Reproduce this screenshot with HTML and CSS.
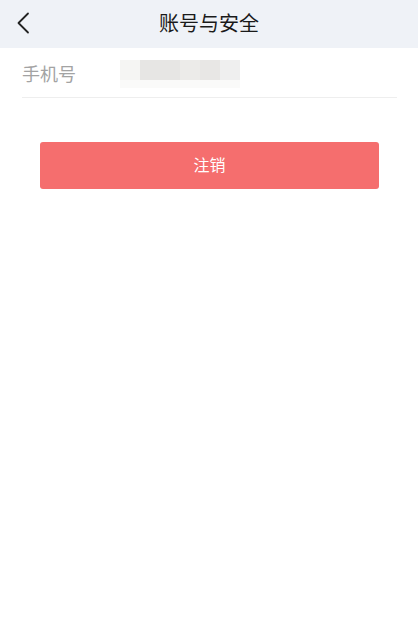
FILE: index.html
```html
<!DOCTYPE html>
<html lang="zh-CN">
<head>
<meta charset="utf-8">
<meta name="viewport" content="width=device-width, initial-scale=1">
<title>账号与安全</title>
<link rel="stylesheet" href="styles.css">
</head>
<body>
<header class="nav">
  <span class="back">
    <svg width="14" height="22" viewBox="0 0 14 22" aria-hidden="true"><path d="M12 1.5 L2.5 11 L12 20.5" fill="none" stroke="#222" stroke-width="1.8" stroke-linecap="round" stroke-linejoin="round"/></svg>
  </span>
  <h1 class="title">账号与安全</h1>
</header>
<main class="content">
  <div class="row">
    <span class="label">手机号</span>
    <span class="masked">
      <span class="mrow top">
        <i class="b1"></i><i class="b2"></i><i class="b3"></i><i class="b4"></i><i class="b5"></i>
      </span>
      <span class="mrow bottom"></span>
    </span>
  </div>
  <div class="actions">
    <button class="btn-danger" type="button">注销</button>
  </div>
</main>
</body>
</html>
```

FILE: styles.css
```css
* { box-sizing: border-box; }
html, body { margin: 0; padding: 0; background: #fff; }
body {
  width: 418px;
  min-height: 622px;
  font-family: "Noto Sans CJK SC", "Noto Sans", sans-serif;
}
.nav {
  height: 48px;
  background: #eff2f7;
  display: flex;
  align-items: center;
  justify-content: center;
  position: relative;
}
.back {
  position: absolute;
  left: 16px;
  top: 12px;
  display: flex;
}
.title {
  margin: 0 0 2px 0;
  font-size: 20px;
  font-weight: 400;
  color: #1a1a1a;
  line-height: 1;
}
.content {
  padding: 0 21px 0 22px;
}
.row {
  height: 50px;
  border-bottom: 1px solid #eeeeee;
  display: flex;
  align-items: center;
}
.label {
  width: 98px;
  font-size: 18px;
  color: #a3a3a3;
  line-height: 1;
  margin-top: 0;
}
.masked {
  display: flex;
  flex-direction: column;
  width: 120px;
  margin-top: 2px;
}
.mrow { display: flex; }
.mrow.top { height: 20px; }
.mrow.bottom { height: 8px; background: #fafaf9; }
.mrow i { display: block; height: 100%; }
.b1 { width: 20px; background: #f5f5f3; }
.b2 { width: 40px; background: #e7e6e4; }
.b3 { width: 20px; background: #ecebe9; }
.b4 { width: 20px; background: #e8e7e5; }
.b5 { width: 20px; background: #efefef; }
.actions {
  padding: 44px 18px 0 18px;
}
.btn-danger {
  display: block;
  width: 100%;
  height: 47px;
  padding: 0 0 3px 0;
  border: 0;
  border-radius: 3px;
  background: #f56e6e;
  color: #fff;
  font-family: "Noto Sans CJK SC", "Noto Sans", sans-serif;
  font-size: 16px;
  letter-spacing: 0;
}
```
